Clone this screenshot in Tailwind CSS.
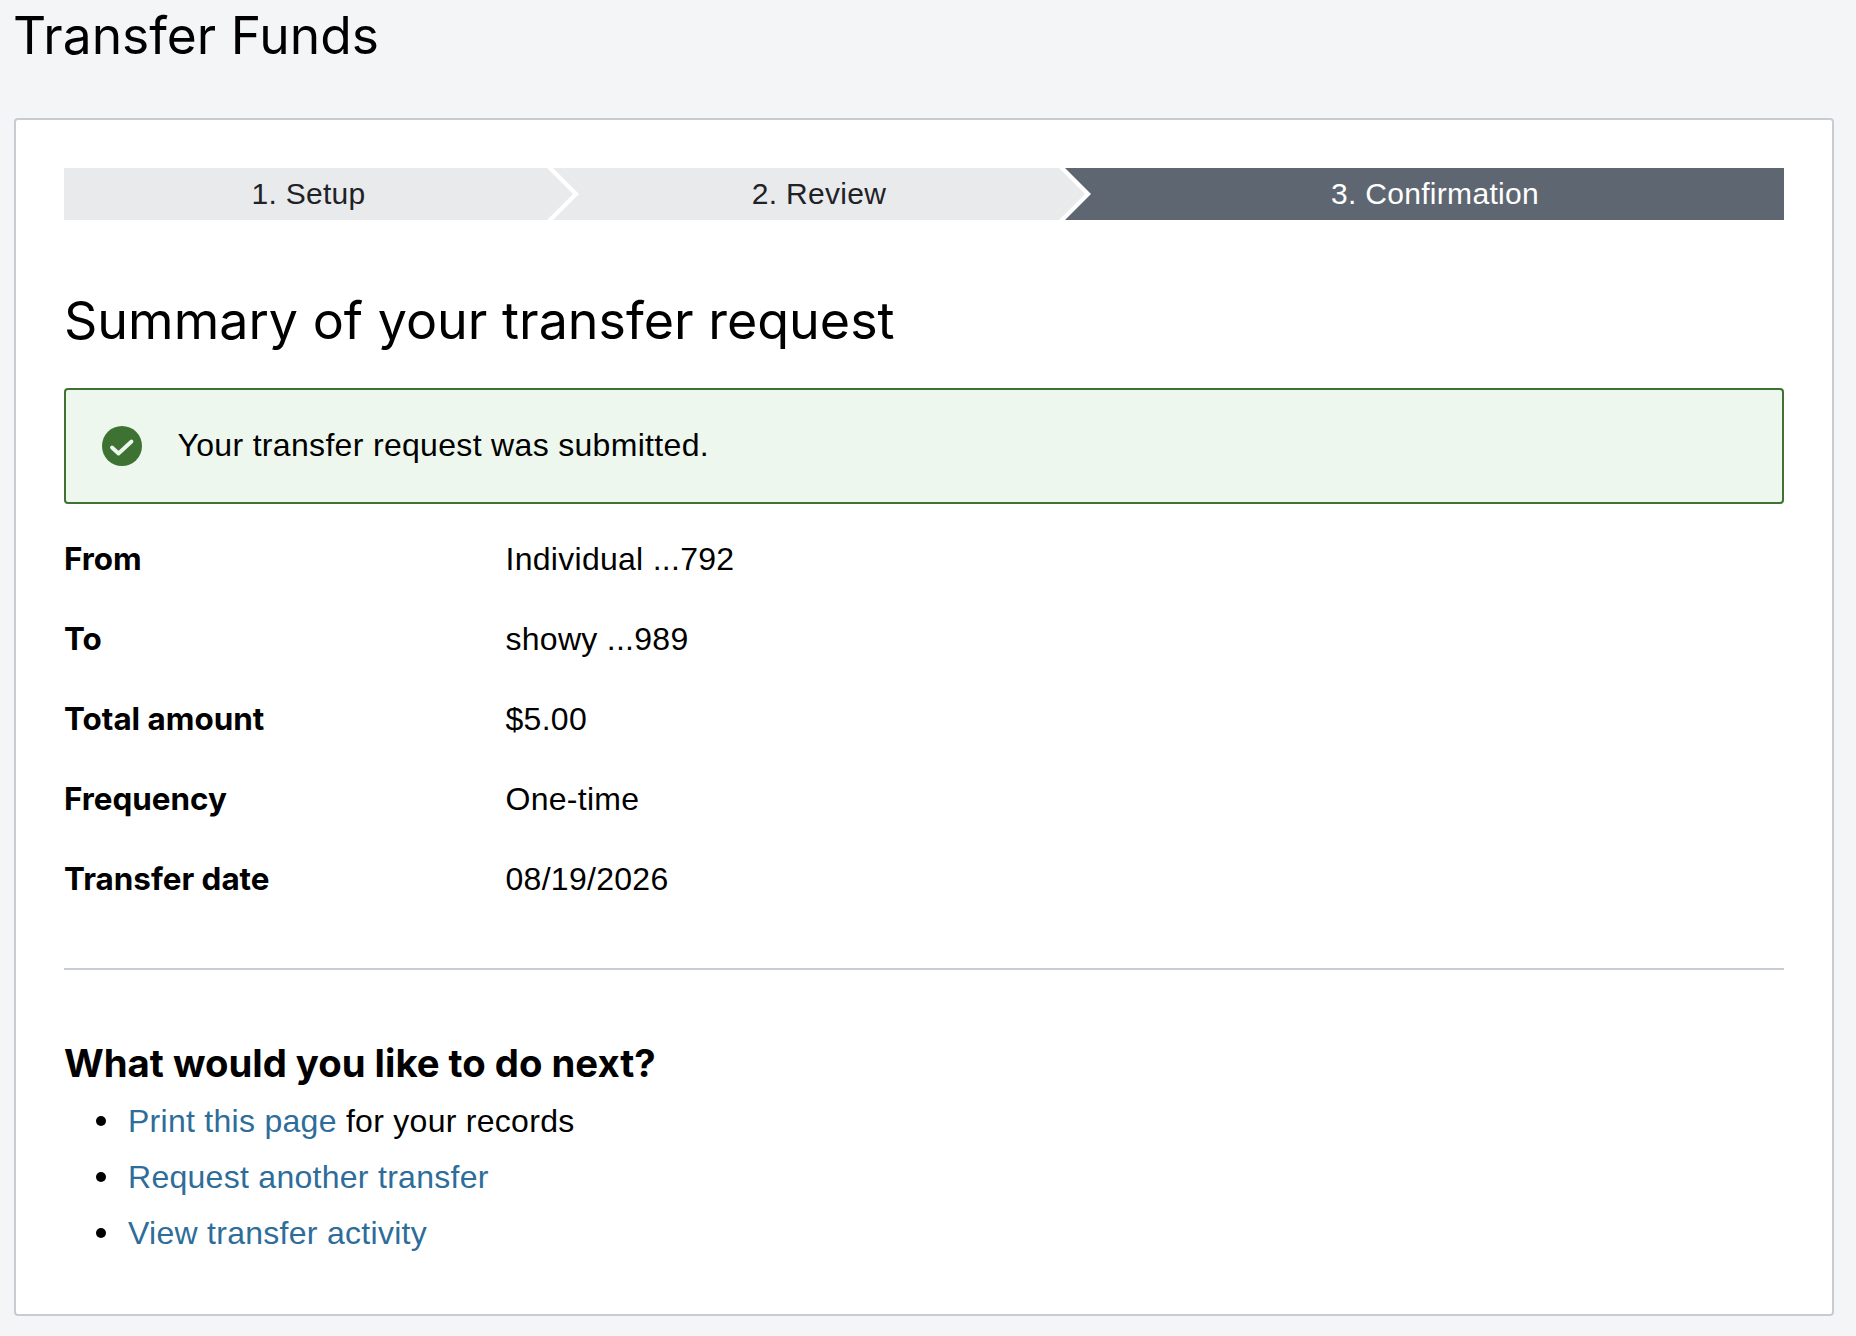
<!DOCTYPE html>
<html lang="en">

<head>
    <meta charset="UTF-8">
    <title>Transfer Funds</title>
    <script src="https://cdn.jsdelivr.net/npm/@tailwindcss/browser@4"></script>
</head>

<body class="bg-[#f4f5f7] min-h-screen font-['Liberation_Sans',Arial,sans-serif] text-[32px] tracking-[0.28px] text-black">
    <h1 class="h-[70px] pl-[13px] font-['Inter',sans-serif] text-[51.5px] leading-[70px] font-normal tracking-normal">Transfer Funds</h1>

    <div class="ml-[14px] mr-[22px] mt-[48px] mb-[21px] rounded-[4px] border-2 border-[#c6ccd1] bg-white px-[48px] pt-[48px] pb-[53px]">
        <!-- steps -->
        <div class="flex h-[52px] text-[30px] leading-[52px] tracking-[0.3px] text-center">
            <div class="w-[509px] bg-[#e9eaec] pl-[6px] pr-[26px] text-[#1f2328] [clip-path:polygon(0_0,calc(100%-26px)_0,100%_50%,calc(100%-26px)_100%,0_100%)]">1. Setup</div>
            <div class="ml-[-20px] w-[532px] bg-[#e9eaec] px-[26px] text-[#1f2328] [clip-path:polygon(0_0,calc(100%-26px)_0,100%_50%,calc(100%-26px)_100%,0_100%,26px_50%)]">2. Review</div>
            <div class="ml-[-20px] flex-1 bg-[#5e6771] pl-[26px] pr-[5px] text-white [clip-path:polygon(0_0,100%_0,100%_100%,0_100%,26px_50%)]">3. Confirmation</div>
        </div>

        <h2 class="mt-[71px] h-[60px] font-['Inter',sans-serif] text-[52px] leading-[60px] font-normal tracking-normal">Summary of your transfer request</h2>

        <div class="mt-[37px] flex h-[116px] items-center rounded-[4px] border-2 border-[#3e7233] bg-[#edf7ed] pl-[36px]">
            <svg class="h-[40px] w-[40px] shrink-0" viewBox="0 0 40 40">
                <circle cx="20" cy="20" r="20" fill="#3e7233" />
                <path d="M10 21.5 L16.5 27.5 L29.5 15.5" fill="none" stroke="#edf7ed" stroke-width="3.8" stroke-linecap="round" stroke-linejoin="round" />
            </svg>
            <span class="ml-[35.5px] pb-[2px] tracking-[0.32px]">Your transfer request was submitted.</span>
        </div>

        <dl class="mt-[15px]">
            <div class="flex h-[80px] items-center">
                <dt class="w-[441.5px] pt-[2px] font-['Inter',sans-serif] text-[31.4px] font-bold tracking-normal">From</dt>
                <dd>Individual ...792</dd>
            </div>
            <div class="flex h-[80px] items-center">
                <dt class="w-[441.5px] pt-[2px] font-['Inter',sans-serif] text-[31.4px] font-bold tracking-normal">To</dt>
                <dd>showy ...989</dd>
            </div>
            <div class="flex h-[80px] items-center">
                <dt class="w-[441.5px] pt-[2px] font-['Inter',sans-serif] text-[31.4px] font-bold tracking-normal">Total amount</dt>
                <dd>$5.00</dd>
            </div>
            <div class="flex h-[80px] items-center">
                <dt class="w-[441.5px] pt-[2px] font-['Inter',sans-serif] text-[31.4px] font-bold tracking-normal">Frequency</dt>
                <dd>One-time</dd>
            </div>
            <div class="flex h-[80px] items-center">
                <dt class="w-[441.5px] pt-[2px] font-['Inter',sans-serif] text-[31.4px] font-bold tracking-normal">Transfer date</dt>
                <dd>08/19/2026</dd>
            </div>
        </dl>

        <hr class="mt-[49px] border-t-2 border-[#c6ccd1]">

        <h3 class="mt-[68px] h-[50px] font-['Inter',sans-serif] text-[38.3px] leading-[50px] font-bold tracking-normal">What would you like to do next?</h3>

        <ul class="mt-[5px] pl-[32px]">
            <li class="flex h-[56px] items-center gap-[22px]"><span class="h-[10px] w-[10px] rounded-full bg-black"></span><span><a href="#" class="text-[#2e6d9a]">Print this page</a> for your records</span></li>
            <li class="flex h-[56px] items-center gap-[22px]"><span class="h-[10px] w-[10px] rounded-full bg-black"></span><a href="#" class="text-[#2e6d9a]">Request another transfer</a></li>
            <li class="flex h-[56px] items-center gap-[22px]"><span class="h-[10px] w-[10px] rounded-full bg-black"></span><a href="#" class="text-[#2e6d9a]">View transfer activity</a></li>
        </ul>
    </div>
</body>

</html>
